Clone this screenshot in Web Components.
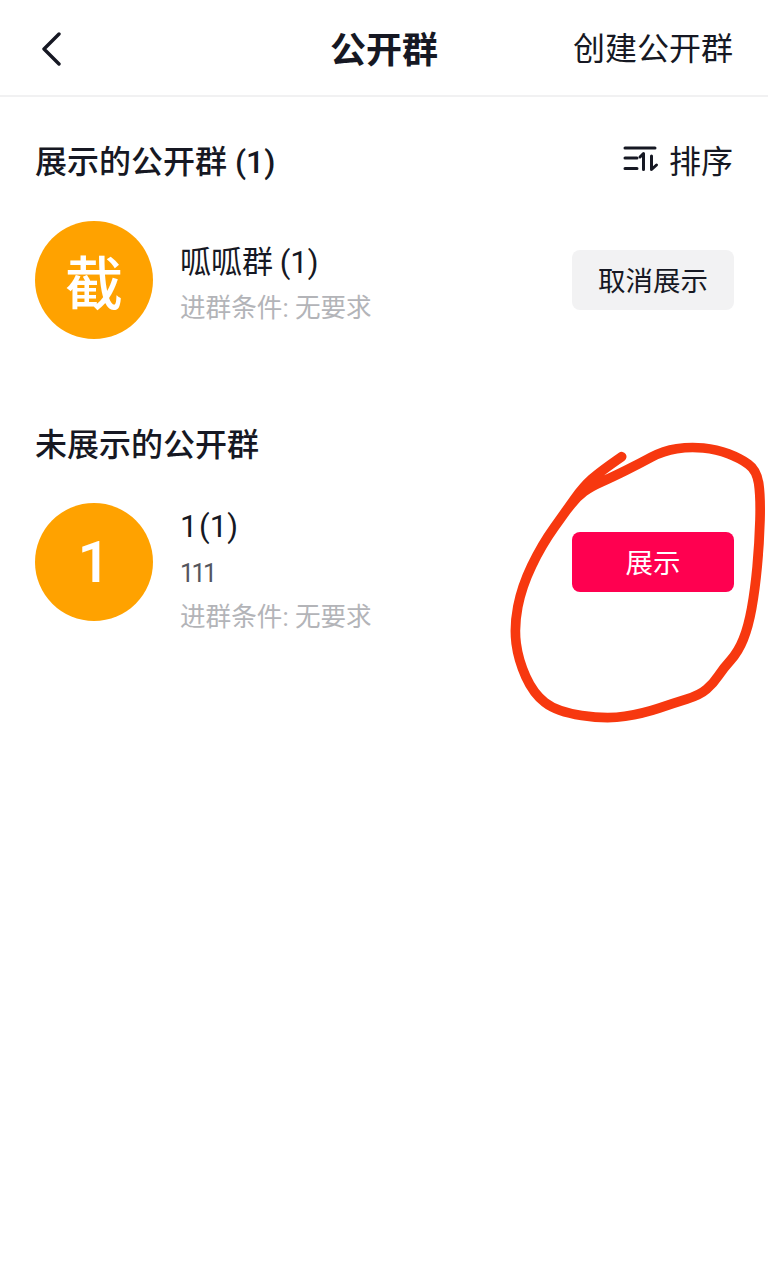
<!DOCTYPE html>
<html lang="zh">
<head>
<meta charset="utf-8">
<title>公开群</title>
<style>
  html, body { margin: 0; background: #fff; }
  body {
    position: relative;
    height: 1280px;
    overflow: hidden;
    font-family: Roboto, "Noto Sans CJK SC", sans-serif;
    color: #161823;
  }
</style>
</head>
<body>
<nav-bar action="创建公开群">公开群</nav-bar>

<section-head style="--head-top: 40px">
  展示的公开群 (1)
  <sort-button slot="action"></sort-button>
</section-head>
<group-row avatar="截" style="--row-top: 40px; --info-shift: 10px">
  <span slot="name">呱呱群 (1)</span>
  <span slot="meta">进群条件: 无要求</span>
  <row-button slot="action">取消展示</row-button>
</group-row>

<section-head style="--head-top: 81px">未展示的公开群</section-head>
<group-row avatar="1" style="--row-top: 39px; --info-shift: 19px">
  <span slot="name" style="word-spacing: -6px">1 (1)</span>
  <span slot="desc">111</span>
  <span slot="meta">进群条件: 无要求</span>
  <row-button slot="action" primary>展示</row-button>
</group-row>

<scribble-mark></scribble-mark>

<script>
class NavBar extends HTMLElement {
  constructor() {
    super();
    this.attachShadow({ mode: 'open' });
  }

  connectedCallback() {
    this.shadowRoot.innerHTML = `
      <style>
        :host {
          display: grid;
          grid-template-columns: 1fr auto 1fr;
          align-items: center;
          height: 95px;
          padding: 0 35px;
          border-bottom: 2px solid #f1f1f2;
          color: #161823;
        }
        svg { display: block; width: 22px; height: 34px; margin: 2px 0 0 5px; }
        .title { font-size: 36px; font-weight: 700; line-height: 48px; margin-top: 6px; }
        .action { justify-self: end; font-size: 32px; line-height: 48px; margin-top: 2px; }
      </style>
      <svg viewBox="0 0 22 34" fill="none" stroke="#161823" stroke-width="3.4" stroke-linecap="round" stroke-linejoin="round">
        <path d="M19 2 4 17l15 15"/>
      </svg>
      <div class="title"><slot></slot></div>
      <div class="action">${this.getAttribute('action') || ''}</div>
    `;
  }
}

class SectionHead extends HTMLElement {
  constructor() {
    super();
    this.attachShadow({ mode: 'open' });
  }

  connectedCallback() {
    this.shadowRoot.innerHTML = `
      <style>
        :host {
          display: flex;
          justify-content: space-between;
          align-items: center;
          height: 44px;
          margin-top: var(--head-top, 0);
          padding: 0 35px;
          font-size: 32px;
          font-weight: 500;
          color: #161823;
        }
      </style>
      <div><slot></slot></div>
      <slot name="action"></slot>
    `;
  }
}

class SortButton extends HTMLElement {
  constructor() {
    super();
    this.attachShadow({ mode: 'open' });
  }

  connectedCallback() {
    this.shadowRoot.innerHTML = `
      <style>
        :host {
          display: flex;
          align-items: center;
          gap: 12px;
          font-size: 32px;
          font-weight: 400;
        }
        svg { display: block; width: 35px; height: 28px; overflow: visible; }
      </style>
      <svg viewBox="0 0 35 28" fill="none" stroke="#161823" stroke-width="3" stroke-linecap="round" stroke-linejoin="round">
        <path d="M3 3h30M3 13h12M3 23.500h12"/>
        <path d="M21.500 24.500V8.500l-3.500 3.500M29.500 11v13.500l5-4.500"/>
      </svg>
      <span>排序</span>
    `;
  }
}

class GroupRow extends HTMLElement {
  constructor() {
    super();
    this.attachShadow({ mode: 'open' });
  }

  connectedCallback() {
    this.shadowRoot.innerHTML = `
      <style>
        :host {
          display: flex;
          align-items: center;
          gap: 27px;
          height: 118px;
          margin-top: var(--row-top, 0);
          padding: 0 34px 0 35px;
        }
        .avatar {
          flex: none;
          display: flex;
          align-items: center;
          justify-content: center;
          width: 118px;
          height: 118px;
          border-radius: 50%;
          background: #ffa200;
          color: #fff;
          font-size: 58px;
          font-weight: 500;
        }
        .info {
          flex: 1;
          display: flex;
          flex-direction: column;
          gap: 2px;
          padding-top: var(--info-shift, 0);
        }
        ::slotted([slot="name"]) { font-size: 31px; line-height: 44px; color: #161823; word-spacing: -1px; }
        ::slotted([slot="desc"]) {
          margin: 2px 0 -1px;
          font-size: 25px;
          line-height: 42px;
          letter-spacing: -2.5px;
          color: #54565e;
        }
        ::slotted([slot="meta"]) { font-size: 25.6px; line-height: 42px; color: #b3b4b8; }
      </style>
      <div class="avatar">${this.getAttribute('avatar') || ''}</div>
      <div class="info">
        <slot name="name"></slot>
        <slot name="desc"></slot>
        <slot name="meta"></slot>
      </div>
      <slot name="action"></slot>
    `;
  }
}

class RowButton extends HTMLElement {
  constructor() {
    super();
    this.attachShadow({ mode: 'open' });
  }

  connectedCallback() {
    this.shadowRoot.innerHTML = `
      <style>
        :host {
          display: flex;
          align-items: center;
          justify-content: center;
          box-sizing: border-box;
          width: 162px;
          height: 60px;
          padding-bottom: 2px;
          border-radius: 8px;
          background: #f2f2f3;
          color: #161823;
          font-size: 27.5px;
        }
        :host([primary]) { background: #ff0050; color: #fff; }
      </style>
      <slot></slot>
    `;
  }
}

// hand drawn circle, laid over the page like the markup on a screenshot
class ScribbleMark extends HTMLElement {
  constructor() {
    super();
    this.attachShadow({ mode: 'open' });
  }

  smoothPath(points) {
    let d = `M${points[0][0]} ${points[0][1]}`;
    for (let i = 1; i < points.length - 1; i++) {
      const [x, y] = points[i];
      const mx = (x + points[i + 1][0]) / 2;
      const my = (y + points[i + 1][1]) / 2;
      d += `Q${x} ${y} ${mx} ${my}`;
    }
    const last = points[points.length - 1];
    return `${d}L${last[0]} ${last[1]}`;
  }

  connectedCallback() {
    const points = [
      [365, 80], [300, 125], [250, 170], [200, 240], [125, 345], [65, 470], [42, 590],
      [55, 690], [100, 790], [170, 845], [320, 868], [430, 850], [520, 820], [600, 795],
      [640, 760], [670, 715], [715, 665], [745, 590], [765, 480], [778, 340], [782, 200],
      [770, 120], [720, 85], [650, 58], [570, 50], [490, 62], [420, 100], [335, 142],
      [272, 170], [232, 200], [196, 245]
    ];
    this.shadowRoot.innerHTML = `
      <style>
        :host { position: absolute; left: 500px; top: 430px; width: 268px; height: 300px; }
        svg { display: block; width: 100%; height: 100%; }
      </style>
      <svg viewBox="0 0 804 900" fill="none" stroke="#f7380f" stroke-width="29" stroke-linecap="round" stroke-linejoin="round">
        <path d="${this.smoothPath(points)}"/>
      </svg>
    `;
  }
}

customElements.define('nav-bar', NavBar);
customElements.define('section-head', SectionHead);
customElements.define('sort-button', SortButton);
customElements.define('group-row', GroupRow);
customElements.define('row-button', RowButton);
customElements.define('scribble-mark', ScribbleMark);
</script>
</body>
</html>
